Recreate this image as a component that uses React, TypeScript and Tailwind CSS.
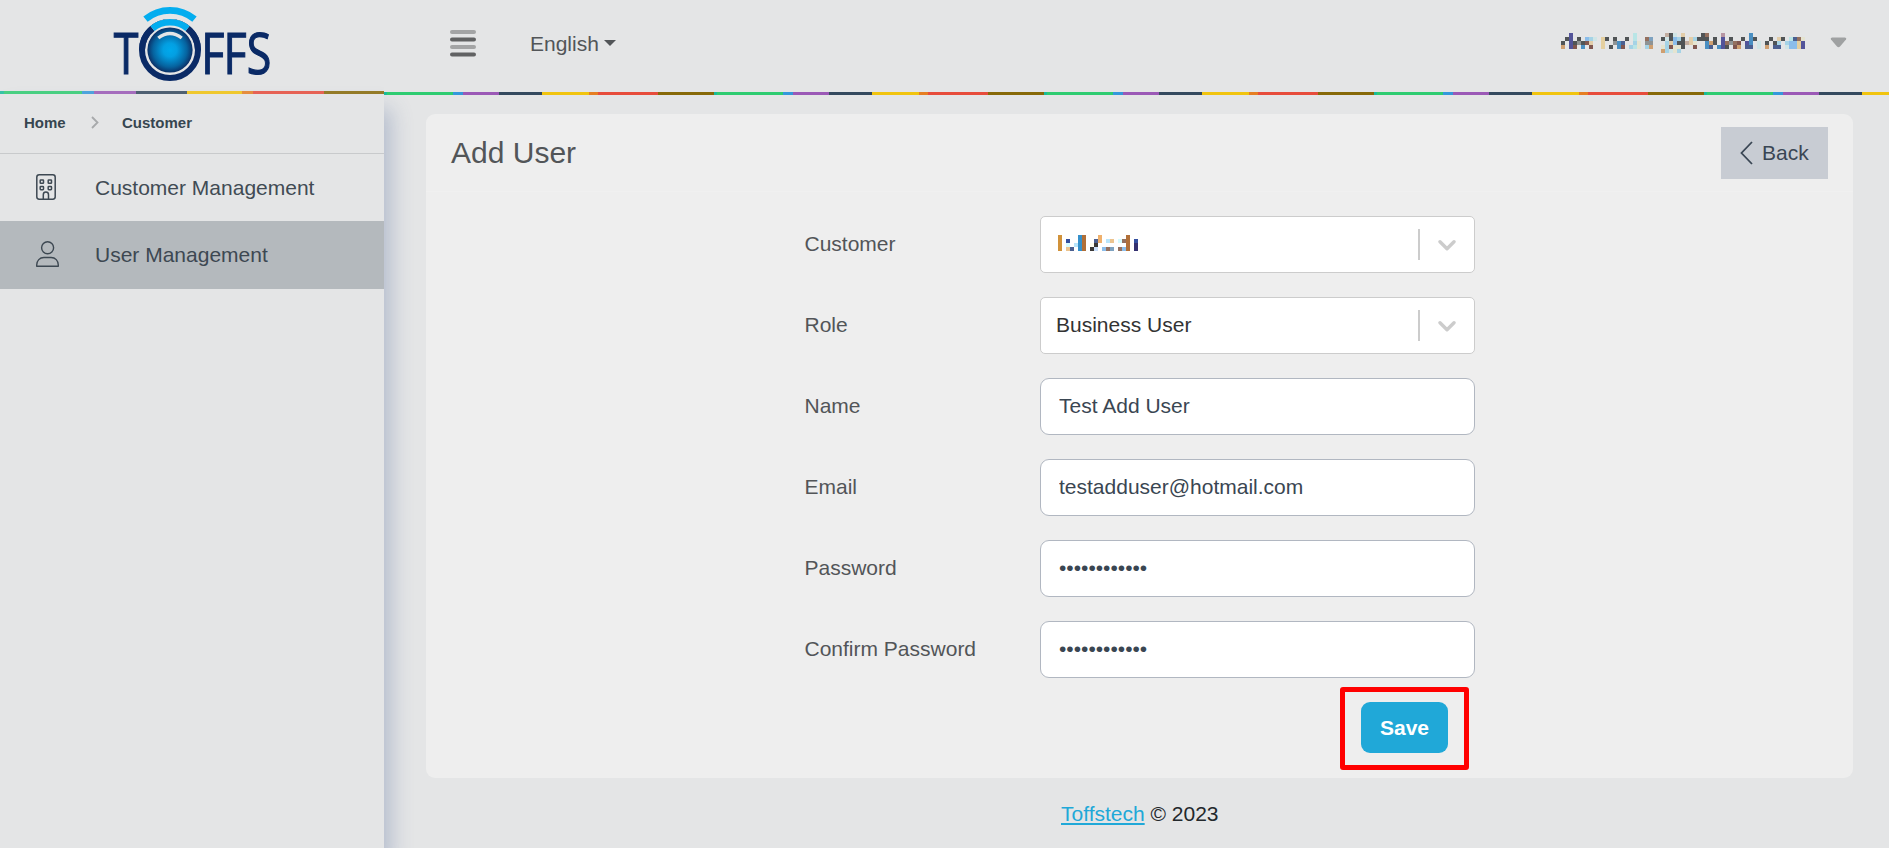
import React from 'react';

const BAND = [
  'bg-[#1abc9c]', 'bg-[#2ecc71]', 'bg-[#3498db]', 'bg-[#9b59b6]', 'bg-[#34495e]',
  'bg-[#f1c40f]', 'bg-[#e67e22]', 'bg-[#e74c3c]', 'bg-[#876908]',
];
const HEADER_WIDTHS = [3, 66, 10, 36, 43, 47, 9, 60, 56];
const SIDE_WIDTHS = [4, 78, 12, 42, 51, 55, 11, 71, 60];

function Band({ widths }: { widths: number[] }) {
  return (
    <div className="flex shrink-0">
      {widths.map((w, i) => (
        <div key={i} className={`h-[3px] shrink-0 ${BAND[i]}`} style={{ width: w }} />
      ))}
    </div>
  );
}

const PALETTE: Record<string, string> = {
  d: '#505456', i: '#53549a', n: '#4b5f90', b: '#4a8fc2', s: '#7ea2c0', l: '#a5d3e6',
  u: '#8bbdea', p: '#d0e5e6', m: '#b9e5e6', c: '#e5e4d0', t: '#e2cda9', y: '#e4cf9f',
  o: '#cf9f70', g: '#8f9394', r: '#80564f', w: '#94705f', k: '#b695a3', a: '#c2ada0',
  O: '#d1923a', B: '#3590cb', R: '#b16f38', P: '#efb06c', L: '#b9e5fb', C: '#d5fbff',
  D: '#3a3837', N: '#3450a0', V: '#343170', T: '#ecc48f', F: '#c9def8', W: '#fffdf0',
};

function Mosaic({ rows, className }: { rows: string[]; className: string }) {
  const cells = rows.map((r) => r.replace(/ /g, ''));
  const cols = Math.max(...cells.map((r) => r.length));
  return (
    <svg className={className} width={cols * 4} height={cells.length * 4} shapeRendering="crispEdges">
      {cells.flatMap((row, y) =>
        row.split('').map((ch, x) =>
          ch === '.' ? null : <rect key={`${x}-${y}`} x={x * 4} y={y * 4} width="4" height="4" fill={PALETTE[ch]} />,
        ),
      )}
    </svg>
  );
}

const ACCOUNT = [
  '..i....... ........m. ......adp. t....dw... k......b.. .......... .',
  '.di.d.ulp. yd.d..d.m. .ws..dpdul d.tlddd.d. i.d..d.bd. ..d.td.mnw c',
  'd.idgdrt.. y..gbn..lc .gg...ltud datc..bod. iwgwr.ib.p .d.dl.luuy i',
  'o.ir.b.r.. y.d.br.lmc .lo..clrcc d..r..bn.b id.ro.nn.p .o.nn.puuy i',
  '.......... .......... .....olpcl .......... .......... .......... .',
];

const CUSTOMER = [
  'O....BR...P......R..',
  'O.N..BR..nP.LT.CwR.N',
  'O.C.LBR.WD.......R.V',
  'O.Tn.BR.DF.uws.wuR.V',
];

function Logo() {
  return (
    <svg width="170" height="82" viewBox="107 4 170 82" className="shrink-0 overflow-visible">
      <defs>
        <radialGradient id="lens">
          <stop offset="0" stopColor="#00a9ec" />
          <stop offset=".3" stopColor="#039fe2" />
          <stop offset=".75" stopColor="#06639f" />
          <stop offset="1" stopColor="#0b2f66" />
        </radialGradient>
      </defs>
      <g fill="#0a2a66" stroke="#0a2a66" strokeWidth="1.2" fontFamily="Open Sans, sans-serif" fontSize="56">
        <text transform="translate(113.8 74.300) scale(.8 1)">T</text>
        <text transform="translate(201.200 74.300) scale(.8 1)">F</text>
        <text transform="translate(223.600 74.300) scale(.8 1)">F</text>
        <text transform="translate(246.800 74.300) scale(.8 1)">S</text>
      </g>
      <circle cx="170" cy="50" r="28" fill="none" stroke="#0a2a66" strokeWidth="6" />
      <path d="M146 34 L151 26 Q170 12 189 26 L194 34 L187 37 Q170 20 153 37Z" fill="#e4e5e6" />
      <path d="M139 50 A31 31 0 0 1 150.5 26 L154.5 31 A25 25 0 0 0 145 50Z M201 50 A31 31 0 0 0 189.5 26 L185.5 31 A25 25 0 0 1 195 50Z" fill="#0a2a66" />
      <path d="M152.500 28.500 A27.8 27.8 0 0 1 187.500 28.500" fill="none" stroke="#03adef" strokeWidth="6.500" />
      <path d="M145.500 19.200 A38.5 38.5 0 0 1 194.500 19.200" fill="none" stroke="#03adef" strokeWidth="6.800" />
      <circle cx="170" cy="50" r="22.600" fill="url(#lens)" />
      <path d="M158.300 38 Q170 29 181.700 38" fill="none" stroke="#e4e5e6" strokeWidth="3.400" />
    </svg>
  );
}

function Building() {
  return (
    <svg width="20" height="26" viewBox="0 0 20 26" fill="none" stroke="#3d4852" strokeWidth="1.5" className="mb-px">
      <rect x=".8" y=".8" width="18.4" height="24.4" rx="2.4" />
      <rect x="4.2" y="6" width="3.3" height="3.3" rx=".6" />
      <rect x="12.2" y="6" width="3.3" height="3.3" rx=".6" />
      <rect x="4.2" y="12.4" width="3.3" height="3.3" rx=".6" />
      <rect x="12.2" y="12.4" width="3.3" height="3.3" rx=".6" />
      <path d="M7.3 25v-4.3a2.6 2.6 0 0 1 5.2 0V25" />
    </svg>
  );
}

function Person() {
  return (
    <svg width="23" height="26" viewBox="0 0 23 26" fill="none" stroke="#3d4852" strokeWidth="1.4" strokeLinejoin="round" className="mb-[2px]">
      <circle cx="11.6" cy="6.7" r="6" />
      <path d="M.7 25.3v-1.2c0-4.500 3-7.600 7.200-7.600h7.200c4.200 0 7.200 3.100 7.200 7.600v1.200z" />
    </svg>
  );
}

function Row({ label, children }: { label: string; children: React.ReactNode }) {
  return (
    <div className="flex h-[57px] items-center">
      <label className="w-[236px] shrink-0 pb-[2px] pl-[0.5px] text-[#525558]">{label}</label>
      {children}
    </div>
  );
}

function Select({ children }: { children: React.ReactNode }) {
  return (
    <div className="flex h-[57px] w-[435px] items-center rounded-[5px] border border-[#cccccc] bg-white pl-[15px] text-[#333333]">
      <div className="flex-1 pb-[2px]">{children}</div>
      <div className="h-[31px] w-[2px] bg-[#cccccc]" />
      <div className="flex w-[54px] justify-center pt-px">
        <svg width="18" height="11" viewBox="0 0 18 11" fill="none" stroke="#cccccc" strokeWidth="3.400" strokeLinecap="round" strokeLinejoin="round">
          <path d="M2 1.800l7 7 7-7" />
        </svg>
      </div>
    </div>
  );
}

function Field({ value, type = 'text' }: { value: string; type?: string }) {
  return (
    <input
      type={type}
      defaultValue={value}
      className="h-[57px] w-[435px] rounded-[9px] border border-[#b1b7c1] bg-white px-[18px] pb-[2px] text-[#3a4652] outline-none"
    />
  );
}

export default function App() {
  return (
    <div className="flex h-[848px] w-full overflow-hidden bg-[#e4e5e6] font-['Liberation_Sans',sans-serif] text-[21px] leading-[30px]">
      <aside className="flex w-[384px] shrink-0 flex-col">
        <div className="flex h-[91px] justify-center pt-1">
          <Logo />
        </div>
        <div className="z-10 flex flex-1 flex-col bg-[#e4e5e6] shadow-[7px_18px_20px_0_rgba(70,95,150,0.3)]">
          <div className="opacity-85">
            <Band widths={SIDE_WIDTHS} />
          </div>
          <nav className="flex h-[60px] items-center border-b border-[#c8cacc] pb-[2px] pl-6 text-[15px] font-bold text-[#374650]">
            <span className="w-[67px]">Home</span>
            <svg width="8" height="13" viewBox="0 0 8 13" fill="none" stroke="#a7a9ab" strokeWidth="1.800" className="mr-[23px]">
              <path d="M1 1l5.500 5.500L1 12" />
            </svg>
            <span>Customer</span>
          </nav>
          <div className="flex h-[67px] items-center pl-[36px] text-[#414b54]">
            <div className="w-[59px]"><Building /></div>
            <span>Customer Management</span>
          </div>
          <div className="flex h-[68px] items-center bg-[#b4b9bd] pl-[36px] text-[#3d4852]">
            <div className="w-[59px]"><Person /></div>
            <span>User Management</span>
          </div>
        </div>
      </aside>
      <main className="flex min-w-0 flex-1 flex-col">
        <header className="z-20 flex h-[92px] items-center bg-[#e4e5e6] pb-1 pl-[66px] pr-[42px]">
          <svg width="26" height="27" viewBox="0 0 26 27" className="mb-px">
            <rect y="0" width="26" height="4" rx="2" fill="#a3a4a5" />
            <rect y="7.500" width="26" height="4" rx="2" fill="#616263" />
            <rect y="15" width="26" height="4" rx="2" fill="#a3a4a5" />
            <rect y="22.500" width="26" height="4" rx="2" fill="#616263" />
          </svg>
          <span className="ml-[54px] text-[#525558]">English</span>
          <svg width="12" height="6" className="ml-[5px] mb-[2px]"><path d="M0 0h12L6 6z" fill="#525558" /></svg>
          <Mosaic rows={ACCOUNT} className="mb-[2px] ml-auto" />
          <svg width="17" height="11" className="ml-[25px] mb-1"><path d="M2 .5h13q2 .5 1 2L10 9.500q-1.500 1.500-3 0L1 2.500q-1-1.500 1-2z" fill="#9fa1a2" /></svg>
        </header>
        <div className="z-20 flex overflow-hidden">
          {[0, 1, 2, 3, 4].map((n) => <Band key={n} widths={HEADER_WIDTHS} />)}
        </div>
        <section className="z-20 ml-[42px] mr-9 mt-[19px] flex h-[664px] flex-col rounded-[9px] bg-[#eeeeee]">
          <div className="flex h-[78px] items-center justify-between border-b border-[#f0f0f0] pl-[25px] pr-[25px]">
            <h1 className="text-[30px] leading-9 text-[#525558]">Add User</h1>
            <button className="flex h-[52px] w-[107px] items-center bg-[#c8ccd3] pl-[19px] text-[#3a4654]">
              <svg width="13" height="24" viewBox="0 0 13 24" fill="none" stroke="#3a4654" strokeWidth="1.800" className="mr-[9px]">
                <path d="M12 1L1.500 12 12 23" />
              </svg>
              Back
            </button>
          </div>
          <div className="ml-[378px] mt-6 flex w-[671px] flex-col gap-6">
            <Row label="Customer"><Select><Mosaic rows={CUSTOMER} className="mb-px ml-[2px]" /></Select></Row>
            <Row label="Role"><Select>Business User</Select></Row>
            <Row label="Name"><Field value="Test Add User" /></Row>
            <Row label="Email"><Field value="testadduser@hotmail.com" /></Row>
            <Row label="Password"><Field type="password" value="aaaaaaaaaaaa" /></Row>
            <Row label="Confirm Password"><Field type="password" value="aaaaaaaaaaaa" /></Row>
          </div>
          <div className="mr-[384px] mt-[9px] flex h-[83px] w-[129px] items-start justify-center self-end rounded-[3px] border-[5px] border-[#ff0000] pt-[10px]">
            <button className="h-[51px] w-[87px] rounded-[9px] bg-[#20a8d8] font-bold text-white">Save</button>
          </div>
        </section>
        <footer className="mt-[21px] pl-[677px] text-[#23282c]">
          <a className="text-[#20a8d8] underline decoration-2 underline-offset-2">Toffstech</a> © 2023
        </footer>
      </main>
    </div>
  );
}
